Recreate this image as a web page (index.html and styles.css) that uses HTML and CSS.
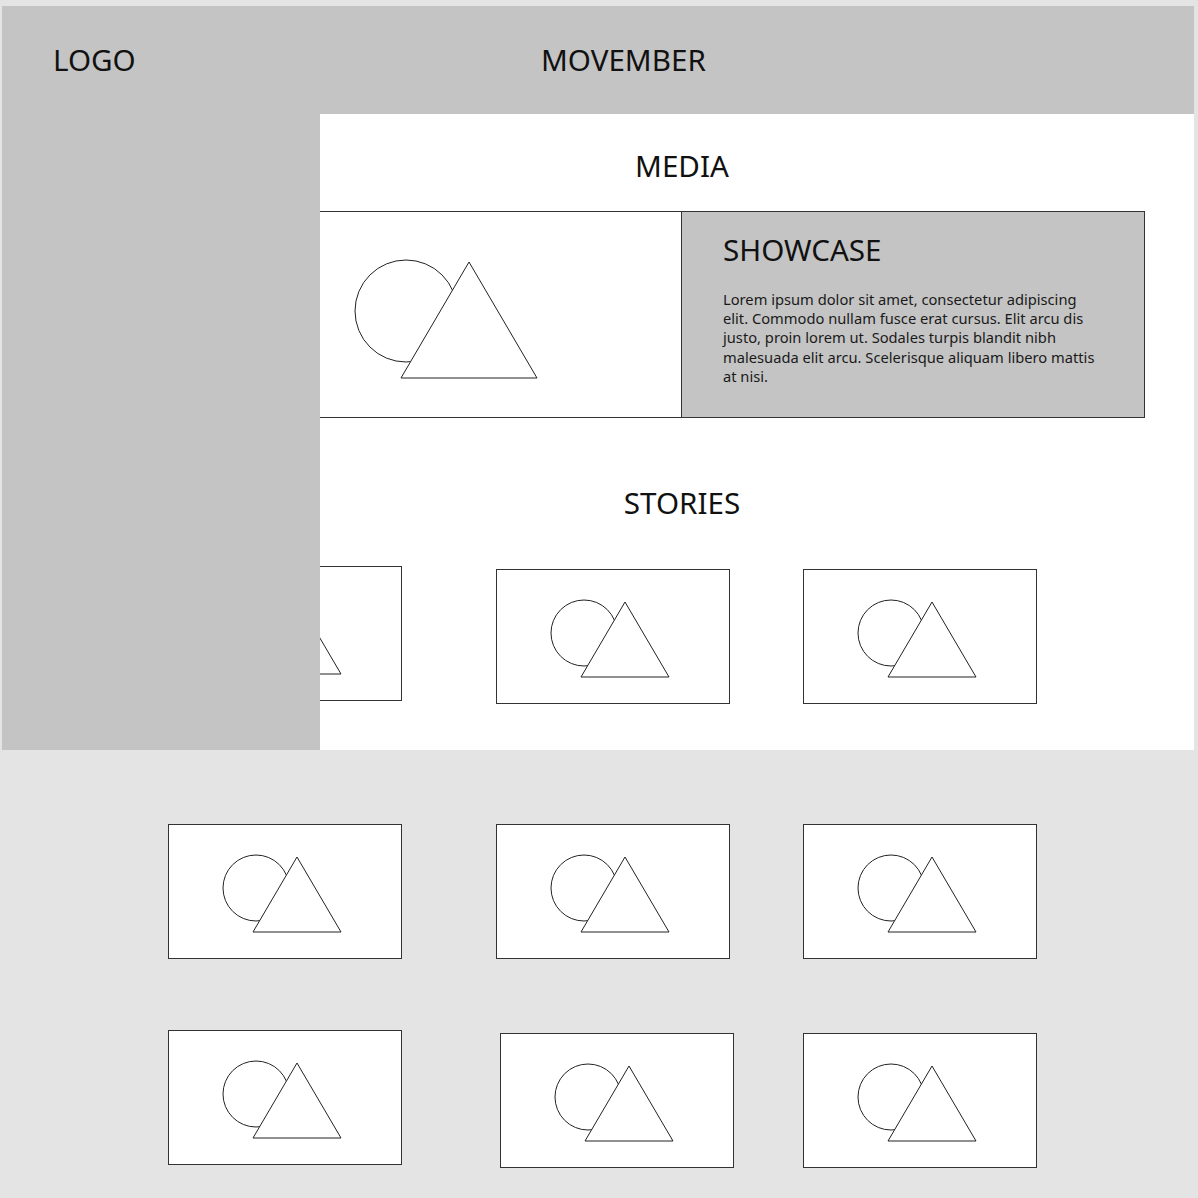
FILE: index.html
```html
<!DOCTYPE html>
<html lang="en">
<head>
<meta charset="utf-8">
<title>Movember</title>
<link rel="stylesheet" href="styles.css">
</head>
<body>
<div class="page">
  <div class="frame">
    <header class="header">
      <div class="logo">LOGO</div>
      <div class="brand">MOVEMBER</div>
    </header>
    <main class="main">
      <div class="column">
        <h2 class="heading media-heading">MEDIA</h2>
        <section class="showcase">
          <div class="showcase-media">
            <svg class="pic-big" width="462" height="205" viewBox="0 0 462 205">
              <circle cx="186" cy="99" r="51" fill="#fff" stroke="#222" stroke-width="1"/>
              <polygon points="249,50 181,166 317,166" fill="#fff" stroke="#222" stroke-width="1"/>
            </svg>
          </div>
          <div class="showcase-text">
            <h3 class="showcase-title">SHOWCASE</h3>
            <p class="showcase-copy">Lorem ipsum dolor sit amet, consectetur adipiscing elit. Commodo nullam fusce erat cursus. Elit arcu dis justo, proin lorem ut. Sodales turpis blandit nibh malesuada elit arcu. Scelerisque aliquam libero mattis at nisi.</p>
          </div>
        </section>
        <h2 class="heading stories-heading">STORIES</h2>
      </div>
      <div class="story-row row-a">
        <div class="card"><svg width="232" height="133" viewBox="0 0 232 133"><circle cx="87" cy="63" r="33" fill="#fff" stroke="#222"/><polygon points="128,32 84,107 172,107" fill="#fff" stroke="#222"/></svg></div>
        <div class="card c2 low"><svg width="232" height="133" viewBox="0 0 232 133"><circle cx="87" cy="63" r="33" fill="#fff" stroke="#222"/><polygon points="128,32 84,107 172,107" fill="#fff" stroke="#222"/></svg></div>
        <div class="card c3 low"><svg width="232" height="133" viewBox="0 0 232 133"><circle cx="87" cy="63" r="33" fill="#fff" stroke="#222"/><polygon points="128,32 84,107 172,107" fill="#fff" stroke="#222"/></svg></div>
      </div>
    </main>
    <aside class="sidebar"></aside>
  </div>
  <div class="gallery">
    <div class="story-row row-b">
      <div class="card"><svg width="232" height="133" viewBox="0 0 232 133"><circle cx="87" cy="63" r="33" fill="#fff" stroke="#222"/><polygon points="128,32 84,107 172,107" fill="#fff" stroke="#222"/></svg></div>
      <div class="card c2"><svg width="232" height="133" viewBox="0 0 232 133"><circle cx="87" cy="63" r="33" fill="#fff" stroke="#222"/><polygon points="128,32 84,107 172,107" fill="#fff" stroke="#222"/></svg></div>
      <div class="card c3"><svg width="232" height="133" viewBox="0 0 232 133"><circle cx="87" cy="63" r="33" fill="#fff" stroke="#222"/><polygon points="128,32 84,107 172,107" fill="#fff" stroke="#222"/></svg></div>
    </div>
    <div class="story-row row-c">
      <div class="card"><svg width="232" height="133" viewBox="0 0 232 133"><circle cx="87" cy="63" r="33" fill="#fff" stroke="#222"/><polygon points="128,32 84,107 172,107" fill="#fff" stroke="#222"/></svg></div>
      <div class="card c2b low"><svg width="232" height="133" viewBox="0 0 232 133"><circle cx="87" cy="63" r="33" fill="#fff" stroke="#222"/><polygon points="128,32 84,107 172,107" fill="#fff" stroke="#222"/></svg></div>
      <div class="card c3b low"><svg width="232" height="133" viewBox="0 0 232 133"><circle cx="87" cy="63" r="33" fill="#fff" stroke="#222"/><polygon points="128,32 84,107 172,107" fill="#fff" stroke="#222"/></svg></div>
    </div>
  </div>
</div>
</body>
</html>
```

FILE: styles.css
```css
* { box-sizing: border-box; }

html, body {
  margin: 0;
  padding: 0;
}

body {
  background: #e4e4e4;
  font-family: "Noto Sans", "Open Sans", "Liberation Sans", sans-serif;
  color: #111;
}

.page {
  padding: 6px 4px 0 2px;
}

.frame {
  position: relative;
  width: 1192px;
}

.header {
  height: 108px;
  background: #c4c4c4;
  display: flex;
  align-items: center;
  padding-left: 51px;
}

.logo {
  width: 488px;
  font-size: 29.6px;
  line-height: 40px;
}

.brand {
  font-size: 29.6px;
  line-height: 40px;
}

.main {
  height: 636px;
  background: #fff;
}

.column {
  margin-left: 217px;
  width: 926px;
  display: flex;
  flex-direction: column;
}

.heading {
  margin: 0;
  font-weight: 400;
  font-size: 29.6px;
  line-height: 40px;
  text-align: center;
}

.media-heading {
  margin-top: 32px;
}

.showcase {
  margin-top: 25px;
  height: 207px;
  border: 1px solid #333;
  display: flex;
}

.showcase-media {
  width: 462px;
  border-right: 1px solid #333;
  background: #fff;
}

.pic-big {
  display: block;
}

.showcase-text {
  flex: 1;
  background: #c4c4c4;
  padding: 18px 40px 0 41px;
}

.showcase-title {
  margin: 0;
  font-weight: 400;
  font-size: 29.6px;
  line-height: 40px;
}

.showcase-copy {
  margin: 20px 0 0 0;
  width: 378px;
  font-size: 14.7px;
  line-height: 19.2px;
  color: #1a1a1a;
}

.stories-heading {
  margin-top: 65px;
}

.story-row {
  display: flex;
  align-items: flex-start;
  margin-left: 166px;
}

.row-a {
  margin-top: 43px;
}

.gallery {
  padding-top: 74px;
}

.row-c {
  margin-top: 71px;
}

.card {
  width: 234px;
  height: 135px;
  border: 1px solid #333;
  background: #fff;
  flex: none;
}

.card svg {
  display: block;
}

.c2 { margin-left: 94px; }
.c3 { margin-left: 73px; }
.c2b { margin-left: 98px; }
.c3b { margin-left: 69px; }
.low { margin-top: 3px; }

.sidebar {
  position: absolute;
  left: 0;
  top: 108px;
  width: 318px;
  height: 636px;
  background: #c4c4c4;
}
```
